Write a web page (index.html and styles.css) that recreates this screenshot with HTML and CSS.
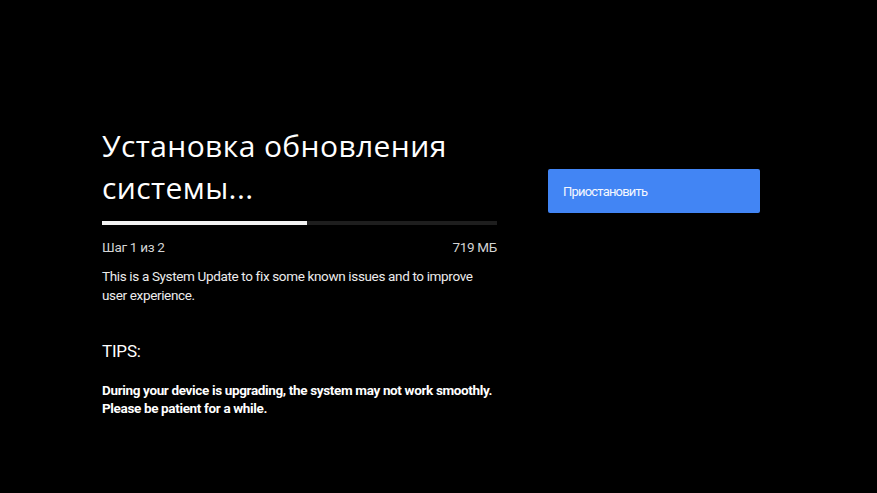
FILE: index.html
```html
<!DOCTYPE html>
<html lang="ru">
<head>
    <meta charset="UTF-8">
    <title>Установка обновления системы</title>
    <link rel="stylesheet" href="styles.css">
</head>
<body>
<div class="update">

    <!-- левая колонка -->
    <div class="update-info">
        <h1 class="update-title">Установка обновления системы...</h1>

        <div class="progress">
            <div class="progress-fill" style="width: 52%"></div>
        </div>

        <div class="progress-meta">
            <span>Шаг 1 из 2</span>
            <span>719 МБ</span>
        </div>

        <p class="update-desc">This is a System Update to fix some known issues and to improve user experience.</p>

        <h2 class="tips-title">TIPS:</h2>
        <p class="tips-text">During your device is upgrading, the system may not work smoothly. Please be patient for a while.</p>
    </div>

    <!-- кнопка -->
    <div class="update-actions">
        <a href="#" class="btn-pause">Приостановить</a>
    </div>
</div>
</body>
</html>
```

FILE: styles.css
```css
html, body {
    margin: 0;
    height: 100%;
    background-color: #000;
}

body {
    font-family: Roboto, "Noto Sans", sans-serif;
    color: #fff;
}

.update {
    display: flex;
    gap: 51px;
    padding: 125px 0 0 102px;
}

.update-info {
    width: 395px;
}

.update-title {
    margin: 0;
    font-family: "Open Sans", "Noto Sans", sans-serif;
    font-weight: 400;
    font-size: 30px;
    line-height: 42px;
    letter-spacing: 0.4px;
}

.progress {
    margin-top: 12px;
    height: 4px;
    background-color: #1e1e1e;
}

.progress-fill {
    height: 100%;
    background-color: #f2f2f2;
}

.progress-meta {
    display: flex;
    justify-content: space-between;
    margin-top: 14px;
    font-size: 13.5px;
    line-height: 16px;
    color: #d4d4d4;
    letter-spacing: -0.3px;
}

.update-desc {
    margin: 12px 0 0;
    font-size: 13.5px;
    line-height: 19px;
    letter-spacing: -0.35px;
    color: #ececec;
}

.tips-title {
    margin: 35px 0 0;
    font-size: 17px;
    font-weight: 400;
    line-height: 22px;
    letter-spacing: -0.2px;
}

.tips-text {
    margin: 19px 0 0;
    font-size: 13.5px;
    font-weight: 700;
    line-height: 18px;
    letter-spacing: -0.35px;
}

.update-actions {
    padding-top: 44px;
}

.btn-pause {
    display: flex;
    align-items: center;
    box-sizing: border-box;
    width: 212px;
    height: 44px;
    padding-left: 15px;
    background-color: #4285f4;
    border-radius: 2px;
    color: #f4f7ff;
    font-size: 13px;
    letter-spacing: -0.8px;
    text-decoration: none;
}
```
